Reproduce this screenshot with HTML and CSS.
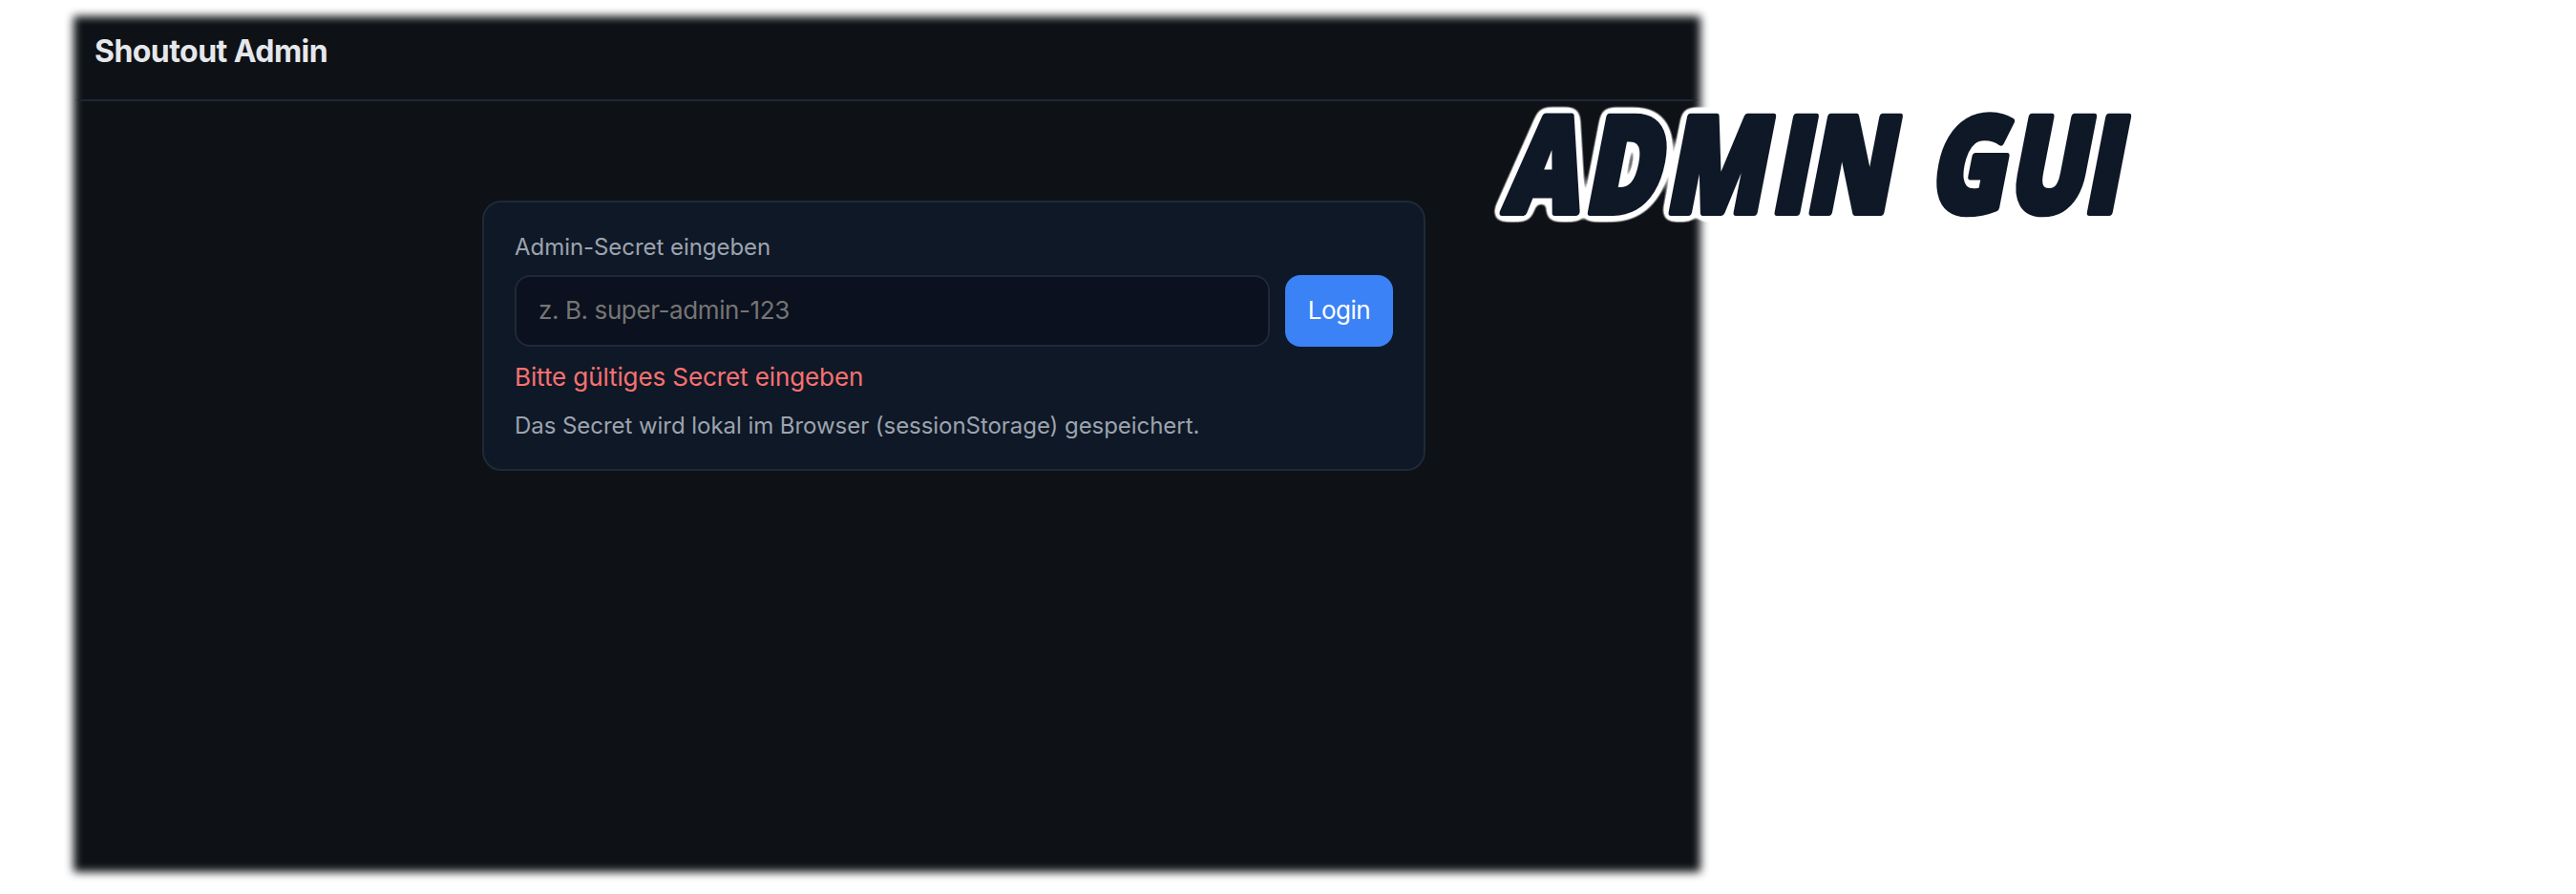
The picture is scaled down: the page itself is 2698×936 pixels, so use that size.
FILE: index.html
```html
<!DOCTYPE html>
<html lang="de">
<head>
<meta charset="utf-8">
<title>Shoutout Admin</title>
<link rel="stylesheet" href="styles.css">
</head>
<body>
<div class="window">
  <header class="header"><h1 class="title">Shoutout Admin</h1></header>
  <main class="main">
    <form class="card">
      <label class="label" for="secret"><span>Admin-Secret eingeben</span></label>
      <div class="row">
        <input class="input" id="secret" type="text" placeholder="z. B. super-admin-123">
        <button class="button" type="button">Login</button>
      </div>
      <p class="error">Bitte gültiges Secret eingeben</p>
      <p class="hint">Das Secret wird lokal im Browser (sessionStorage) gespeichert.</p>
    </form>
  </main>
</div>
<svg class="banner" viewBox="0 0 800 180" width="800" height="180">
  <defs>
    <filter id="outline" x="-5%" y="-20%" width="110%" height="140%" color-interpolation-filters="sRGB">
      <feGaussianBlur in="SourceAlpha" stdDeviation="5"/>
      <feComponentTransfer result="edge">
        <feFuncR type="linear" slope="0" intercept="1"/>
        <feFuncG type="linear" slope="0" intercept="1"/>
        <feFuncB type="linear" slope="0" intercept="1"/>
        <feFuncA type="linear" slope="14" intercept="-0.6"/>
      </feComponentTransfer>
      <feMerge><feMergeNode in="edge"/><feMergeNode in="SourceGraphic"/></feMerge>
    </filter>
  </defs>
  <g filter="url(#outline)">
    <text class="banner-text" transform="translate(0 142) skewX(-11) scale(.77 1)" x="44 153 263 407 454 560 621 728 832" y="0">ADMIN GUI</text>
  </g>
</svg>
</body>
</html>
```
FILE: styles.css
```css
* { box-sizing: border-box; }
body {
  margin: 0;
  width: 2698px;
  height: 936px;
  overflow: hidden;
  position: relative;
  background: #fff;
  font-family: Inter, "Liberation Sans", sans-serif;
}
.window {
  position: relative;
  width: 1702px;
  height: 896px;
  margin: 17px 0 0 78px;
}
.window::before {
  content: "";
  position: absolute;
  inset: 0 -1px 0 -1px;
  background: #0e1115;
  filter: blur(5px);
}
.header {
  position: relative;
  height: 89px;
  padding: 17px 21px;
  background: linear-gradient(90deg, transparent, #1f2838 10px, #1f2838 calc(100% - 10px), transparent) bottom / 100% 2px no-repeat;
}
.title {
  margin: 0;
  font-size: 32px;
  line-height: 40px;
  font-weight: 700;
  letter-spacing: -0.55px;
  color: #e5e7eb;
}
.main {
  position: relative;
  padding: 104px 287px 0 427px;
}
.card {
  height: 283px;
  padding: 27px 32px 24px;
  border: 2px solid #1f2937;
  border-radius: 20px;
  background: #0f1826;
}
.label, .error, .hint {
  display: block;
  margin: 0;
  line-height: 40px;
  font-size: 24px;
  letter-spacing: -0.05px;
  color: #9ca3af;
  white-space: nowrap;
}
.row {
  display: flex;
  gap: 16px;
  margin: 9px 0 12px;
  height: 75px;
}
.input {
  flex: 1;
  min-width: 0;
  padding: 0 24px 2px 23px;
  border: 2px solid #1f2937;
  border-radius: 16px;
  background: #0b111e;
  color: #e5e7eb;
  font: 26px Inter, sans-serif;
  letter-spacing: -0.4px;
}
.input::placeholder { color: #757575; }
.button {
  width: 113px;
  padding: 0 0 2px;
  border: 0;
  border-radius: 16px;
  background: #3b82f6;
  color: #fff;
  font: 26px Inter, sans-serif;
  letter-spacing: -0.5px;
}
.error { font-size: 26px; letter-spacing: -0.1px; color: #f87171; }
.hint { margin-top: 11px; }
.banner {
  position: absolute;
  left: 1540px;
  top: 80px;
}
.banner-text {
  font-family: "Open Sans", sans-serif;
  font-weight: 800;
  font-size: 139px;
  fill: #0f1826;
  stroke: #0f1826;
  stroke-width: 8px;
  stroke-linejoin: round;
}
```
